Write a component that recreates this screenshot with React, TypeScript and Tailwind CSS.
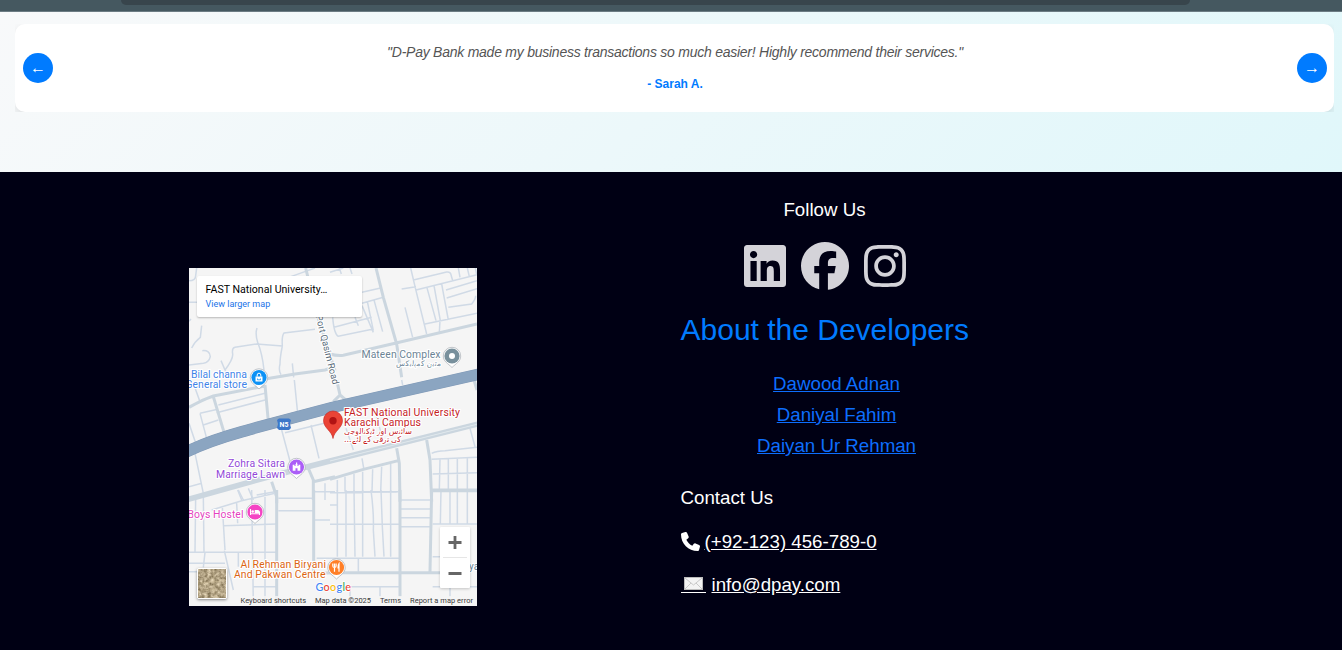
import React from "react";
import { FaFacebook, FaInstagram, FaLinkedin, FaPhone } from "react-icons/fa6";

type Tile = { x: number; y: number; minor: string; major: string };

// Street geometry, one tile per map section, drawn at three units per pixel.
const tiles: Tile[] = [
  {
    x: 185,
    y: 264,
    minor:
      "M12 50Q32 50 32 35L35 12M12 115H36M12 172L18 165M50 185L46 220Q30 232 20 252M52 260Q75 258 76 278Q72 295 55 298L12 303M108 290L120 318L130 340M120 318Q145 285 143 270Q140 252 150 250L215 240L292 246M216 192Q210 210 218 235Q232 270 237 318M292 246Q290 215 297 207L390 196M292 246Q285 280 285 300Q280 320 288 332M322 298L326 340M255 60L345 28L390 12",
    major: "M362 12L370 45L398 158L450 320M240 345L330 330L420 318L450 308",
  },
  {
    x: 330,
    y: 264,
    minor:
      "M0 25L40 12M96 85L152 72M96 118L160 100M8 160Q12 210 25 217L130 195M12 190L125 160M75 160L85 185M96 125L130 205M112 112L130 200M132 108L158 203M28 12L34 30M60 12L66 30M242 12L258 80L290 210M215 75L258 68M225 130L248 220M250 48L350 24Q362 22 364 36L368 50M258 78L441 32M290 68L318 170M312 65L331 170M335 60L355 168M285 180L441 148M348 78L441 50M350 102L441 74M355 130L425 120Q437 105 437 95M330 170L328 205M385 12L390 40M412 12L418 38M436 12L440 32",
    major: "M138 12L160 100L200 240L215 340M0 270Q20 276 40 274L195 238L441 180M0 300L4 340",
  },
  {
    x: 185,
    y: 380,
    minor:
      "M100 75L240 40M95 98L240 60M45 100L98 88M45 100L65 175M55 135L100 120M12 130L34 195M328 0L338 100M290 150L318 255M300 158L430 127M378 135L402 235M30 220L55 340M12 320L50 310M158 330L170 360M190 325L205 360M215 345L270 335M385 335H450M420 310V360M25 10L45 65",
    major: "M240 15L250 125M85 50L118 160M12 82Q50 60 85 48L240 18M370 265L385 300V360M385 305L450 290M260 305L275 350V370",
  },
  {
    x: 330,
    y: 380,
    minor:
      "M22 300V335M45 290V335M72 282V335M96 235L102 270M98 275V335M128 268L126 335M155 260L152 335M182 252V335M45 335H205M305 220Q320 212 345 212L441 202M305 238L441 232M330 238L328 328M355 238V328M382 236V328M412 234V328M308 282L441 278M420 145L435 200M215 0L218 15M48 145L70 210M140 110L152 155",
    major: "M200 205L208 250L210 365M290 180L300 240L305 365M308 330H441M0 298L100 268L205 242M20 0L30 45L10 65M30 45L50 62M432 0L441 30",
  },
  {
    x: 185,
    y: 490,
    minor:
      "M32 20L30 185M55 20L57 185M112 50L120 180M155 40L158 100M160 0L175 30M200 0L205 340M240 0V340M80 60L170 32L270 10M115 107L275 102M12 187H275M118 182L145 300M160 185V230M12 220H120M12 245H120M280 25H385M280 62H385M390 90H435M395 205H435M205 290H275M60 187L55 232",
    major: "M275 0V348M386 0V250L450 248",
  },
  {
    x: 330,
    y: 490,
    minor:
      "M22 0V200M48 0V200M72 0L75 200M98 0V200M123 0Q132 70 130 120L135 200M153 0L157 110L162 200M182 0V200M0 103H207M0 205H207M85 205V245M0 8L200 5M210 30H303M210 57H303M210 83H303M210 110H303M333 0L331 100M360 0V100M382 0V100M412 0V100M308 102H441M308 200H330M0 290H207M308 290H441M0 45H22M60 290V320M150 290V320M360 290V320",
    major: "M210 0V320M305 0L300 245M0 248H330M308 2H441",
  },
];

function Pin({ x, y, color, children }: { x: number; y: number; color: string; children?: React.ReactNode }) {
  return (
    <g transform={`translate(${x} ${y})`}>
      <path d="M-8.700 0A8.700 8.700 0 0 1 8.700 0C8.700 5.500 4 7.500 0 11.500C-4 7.500-8.700 5.500-8.700 0Z" fill="#fff" stroke="#a6acb3" strokeWidth=".7" />
      <circle r="7.600" fill={color} />
      {children}
    </g>
  );
}

function StreetMap() {
  return (
    <svg className="block h-full w-full font-[Roboto,sans-serif]" viewBox="189 268 288 338">
      <rect x="189" y="268" width="288" height="338" fill="#f5f5f5" />
      {tiles.map((t) => (
        <g key={`${t.x}-${t.y}`} transform={`translate(${t.x} ${t.y}) scale(.33333)`} fill="none">
          <path d={t.minor} stroke="#d0dae6" strokeWidth="4.500" />
          <path d={t.major} stroke="#cbd6df" strokeWidth="9" />
        </g>
      ))}
      <g fill="none">
        <path d="M186 500L268 477L330 461L478 424" stroke="#cbd6df" strokeWidth="5.500" />
        <path d="M330 461L478 424" stroke="#e6ecf0" strokeWidth=".8" />
        <path d="M186 452C215 438 235 434 255 428L332 407.500L480 374" stroke="#7f98b6" strokeWidth="11.500" />
        <path d="M186 452C215 438 235 434 255 428L332 407.500L480 374" stroke="#8ba5c1" strokeWidth="10.500" />
      </g>
      <path d="M277 420L279 418.500H289L291 420L290 424L291 428L289 430H279L277 428L278 424Z" fill="#3d78c9" />
      <text x="284" y="427" fontSize="7" fontWeight="700" fill="#fff" textAnchor="middle">N5</text>

      <g stroke="#fff" strokeWidth="2.200" strokeLinejoin="round" paintOrder="stroke" fontSize="10.500">
        <text transform="translate(316 318) rotate(76)" x="-2" y="0" fontSize="9.500" fill="#596b79" textLength="71">Port Qasim Road</text>
        <g fill="#6c8495">
          <text x="361.500" y="358" textLength="79">Mateen Complex</text>
          <text x="441" y="366" fontSize="7.500" textAnchor="end" textLength="45" fontFamily="'DejaVu Sans',sans-serif">متین کمپلیکس</text>
        </g>
        <g fill="#3f83e8">
          <text x="191" y="378" textLength="56">Bilal channa</text>
          <text x="185.500" y="388" textLength="61.500">General store</text>
        </g>
        <g fill="#9248d8">
          <text x="228" y="467" textLength="57">Zohra Sitara</text>
          <text x="216" y="477.500" textLength="69">Marriage Lawn</text>
        </g>
        <text x="187.500" y="517.500" fill="#e442c0" textLength="56">Boys Hostel</text>
        <g fill="#dc6412">
          <text x="240.500" y="567.500" textLength="85.500">Al Rehman Biryani</text>
          <text x="234" y="578" textLength="91.500">And Pakwan Centre</text>
        </g>
        <g fill="#c5221f">
          <text x="344" y="415.500" textLength="116">FAST National University</text>
          <text x="344" y="426" textLength="77">Karachi Campus</text>
          <g fontSize="8" fontFamily="'DejaVu Sans',sans-serif">
            <text x="412" y="434" textAnchor="end" textLength="68">سائنس اور ٹیکنالوجی</text>
            <text x="401" y="442" textAnchor="end" textLength="49">کی ترقی کے لئے</text>
            <text x="344" y="442">...</text>
          </g>
        </g>
        <text x="469" y="570" fontSize="10" fill="#6c8495">ya</text>
      </g>

      <Pin x={452} y={356} color="#78909c"><circle r="3" fill="#fff" /></Pin>
      <Pin x={259} y={377.500} color="#0b91f5">
        <path d="M-3.500-1H3.500V4H-3.500Z" fill="#fff" />
        <path d="M-1.800-1V-2.500A1.800 1.800 0 0 1 1.800-2.500V-1" fill="none" stroke="#fff" />
        <path d="M-1.500 1V2.300H1.500V1" fill="none" stroke="#0b91f5" strokeWidth=".8" />
      </Pin>
      <Pin x={296.500} y={467} color="#ab5ef7">
        <path d="M-3.800 3.800V-2.200H-2V-1H-1V-3H-.500V-4.500H.700V-3H1V-1H2V-2.200H3.800V3.800H1V1.200H-1V3.800Z" fill="#fff" />
      </Pin>
      <Pin x={255} y={512} color="#f543c4">
        <path d="M-4.500-3V3M-4.500 1.800H4.500M4.500 3V-.5" fill="none" stroke="#fff" strokeWidth="1.100" />
        <path d="M-.3 1V-2H3Q4.500-2 4.500-.5V1Z" fill="#fff" />
        <circle cx="-2.300" cy="-.5" r="1.300" fill="#fff" />
      </Pin>
      <Pin x={336.500} y={567.500} color="#ff7f27">
        <path d="M-2-4V4.200M-3.700-4V-1.500Q-3.700 0-2 0Q-.4 0-.4-1.500V-4M2.500 4.200V-4Q1.300-2.500 1.500.5H2.500" fill="none" stroke="#fff" strokeWidth="1.200" />
      </Pin>
      <path d="M333 438.500C332 431 323.500 428 323.500 420.500A9.500 9.500 0 0 1 342.500 420.500C342.500 428 334 431 333 438.500Z" fill="#ea4335" stroke="#c5221f" strokeWidth=".6" />
      <circle cx="333" cy="420.800" r="3.700" fill="#b11313" />

      <rect x="238" y="596" width="239" height="10" fill="#f5f5f5" opacity=".8" />
      <text
        x="315.500"
        y="590.500"
        textLength="35.500"
        fontSize="10.800"
        fontWeight="500"
        stroke="#fff"
        strokeWidth="1.500"
        paintOrder="stroke"
        fontFamily="Lato,sans-serif"
      >
        <tspan fill="#4285f4">G</tspan><tspan fill="#ea4335">o</tspan><tspan fill="#fbbc04">o</tspan><tspan fill="#4285f4">g</tspan><tspan fill="#34a853">l</tspan><tspan fill="#ea4335">e</tspan>
      </text>
      <g fontSize="7.500" fill="#3a3a3a">
        <text x="240.500" y="603" textLength="65.500">Keyboard shortcuts</text>
        <text x="315" y="603" textLength="56">Map data ©2025</text>
        <text x="380" y="603" textLength="21">Terms</text>
        <text x="410" y="603" textLength="63">Report a map error</text>
      </g>
    </svg>
  );
}

function SatelliteThumb() {
  return (
    <svg className="block h-full w-full" viewBox="0 0 28 28">
      <filter id="terrain" x="0" y="0" width="1" height="1" colorInterpolationFilters="sRGB">
        <feTurbulence type="fractalNoise" baseFrequency=".3" numOctaves="3" seed="4" />
        <feColorMatrix values=".6 0 0 0 .4  .6 0 0 0 .34  .6 0 0 0 .22  0 0 0 0 1" />
      </filter>
      <rect width="28" height="28" filter="url(#terrain)" />
      <path d="M0 14L28 11M15 0L17 28M0 22L16 20" stroke="#cdbd98" strokeWidth=".8" opacity=".6" />
    </svg>
  );
}

function MapEmbed() {
  return (
    <div className="relative h-[338px] w-[288px] overflow-hidden">
      <StreetMap />
      <div className="absolute left-2 top-2 h-[41px] w-[165px] rounded-[2px] bg-white px-[8.500px] pt-[6px] font-[Roboto,sans-serif] shadow-[0_1px_2px_rgba(0,0,0,.25)]">
        <div className="whitespace-nowrap text-[10.600px] leading-[15px] text-black">FAST National University…</div>
        <div className="text-[9px] leading-[14px] text-[#1a73e8]">View larger map</div>
      </div>
      <div className="absolute bottom-[7px] left-2 h-[31px] w-[30px] rounded-[2px] border border-white shadow-[0_1px_3px_rgba(0,0,0,.45)]">
        <SatelliteThumb />
      </div>
      <div className="absolute right-[7px] top-[259px] h-[61px] w-[30px] rounded-[1px] bg-white shadow-[0_1px_3px_rgba(0,0,0,.2)]">
        <svg className="h-[61px] w-[30px]" viewBox="0 0 30 61">
          <path d="M8.500 15.500H21.500M15 9V22M8.500 46.500H21.500" stroke="#666" strokeWidth="2.800" />
          <path d="M3 30.500H27" stroke="#e6e6e6" />
        </svg>
      </div>
    </div>
  );
}

const developers = ["Dawood Adnan", "Daniyal Fahim", "Daiyan Ur Rehman"];

export default function App() {
  return (
    <div className="flex h-[650px] w-[1342px] flex-col overflow-hidden font-['Liberation_Sans',Arial,sans-serif]">
      <div className="h-3 shrink-0 border-b border-[#6c7c83] bg-[#455860] pl-[121px]">
        <div className="h-[5px] w-[1069px] rounded-b-[14px] bg-[#38454c]" />
      </div>

      <section className="h-40 shrink-0 bg-linear-[135deg,#f8f9fa,#e0f7fa] pl-[15px] pr-2 pt-3">
        <div className="h-[88px] overflow-hidden">
          <div className="flex h-[88px] items-center justify-between rounded-[10px] bg-white pl-2 pr-[7px] shadow-[0_4px_10px_rgba(0,0,0,.1)]">
            <button className="flex size-[30px] items-center justify-center rounded-full bg-[#007bff] text-[16px] leading-none text-white">←</button>
            <div className="flex flex-col items-center pb-[3px]">
              <p className="whitespace-nowrap text-[14px] italic leading-[22px] tracking-[-0.245px] text-[#555]">
                "D-Pay Bank made my business transactions so much easier! Highly recommend their services."
              </p>
              <p className="mt-[12px] text-[12px] font-bold leading-[18px] text-[#007bff]">- Sarah A.</p>
            </div>
            <button className="flex size-[30px] items-center justify-center rounded-full bg-[#007bff] text-[16px] leading-none text-white">→</button>
          </div>
        </div>
      </section>

      <footer className="flex flex-1 bg-[#000014] pl-[189px]">
        <div className="pt-24">
          <MapEmbed />
        </div>
        <div className="ml-[203.500px] flex w-[288px] flex-col pt-6 text-[18.720px] leading-7 text-white">
          <h4 className="text-center">Follow Us</h4>
          <div className="mt-[18px] flex justify-center gap-[15px] text-[#d4d3d9]">
            <FaLinkedin className="h-12 w-[42px]" />
            <FaFacebook className="size-12" />
            <FaInstagram className="h-12 w-[42px]" />
          </div>
          <h2 className="mt-[22px] whitespace-nowrap text-center text-[30px] leading-9 text-[#007bff]">About the Developers</h2>
          <ul className="mt-5 pl-6 text-center leading-[31px] text-[#0d6efd]">
            {developers.map((name) => (
              <li key={name}>
                <a className="underline">{name}</a>
              </li>
            ))}
          </ul>
          <h4 className="mt-[23px]">Contact Us</h4>
          <p className="mt-4 flex items-center gap-[5px]">
            <FaPhone className="mb-[2px] size-[19px]" />
            <a className="underline">(+92-123) 456-789-0</a>
          </p>
          <p className="mt-[15px] flex gap-[6px]">
            <span className="flex h-[22px] w-[25px] items-end justify-center border-b border-white pb-[2px]">
              <svg className="h-[13px] w-[19px]" viewBox="0 0 19 13">
                <rect x=".5" y=".5" width="18" height="12" fill="#f3f3f3" stroke="#bcbcbc" />
                <path d="M1 1L9.500 8L18 1M1 12L7 6M18 12L12 6" fill="none" stroke="#c9c9c9" />
              </svg>
            </span>
            <a className="underline">info@dpay.com</a>
          </p>
        </div>
      </footer>
    </div>
  );
}
